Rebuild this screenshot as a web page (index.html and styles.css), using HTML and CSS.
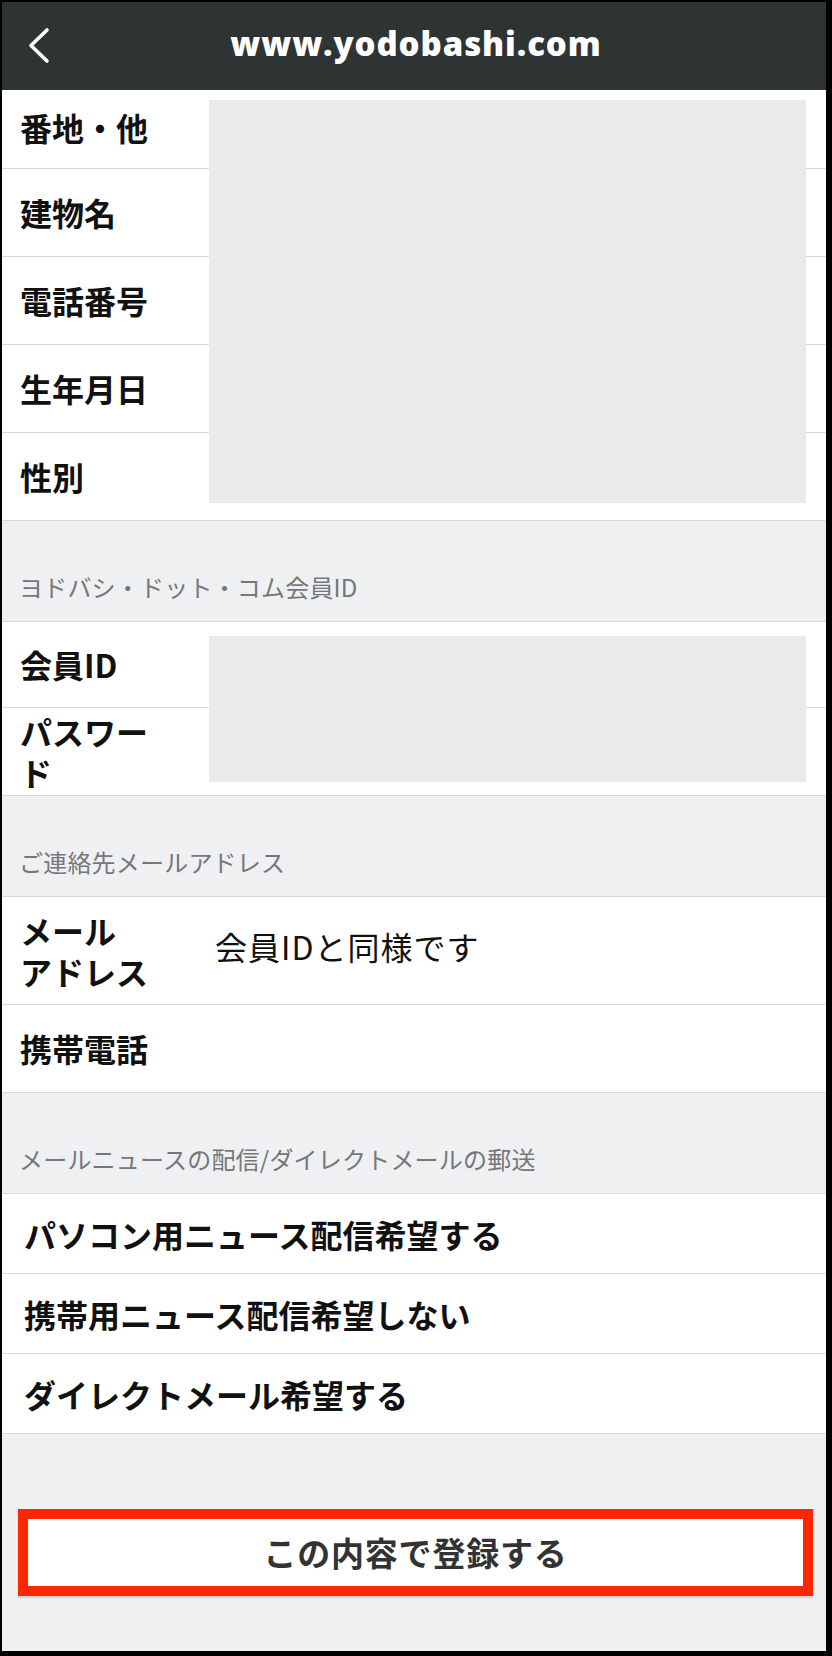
FILE: index.html
```html
<!DOCTYPE html>
<html lang="ja">
<head>
<meta charset="utf-8">
<title>www.yodobashi.com</title>
<link rel="stylesheet" href="styles.css">
</head>
<body>
<div class="frame">
  <header class="topbar">
    <div class="topbar-left">
      <svg class="back" width="24" height="40" viewBox="0 0 24 40" aria-hidden="true">
        <polyline points="19,3 3,18.5 19,34" fill="none" stroke="#fff" stroke-width="3.6" stroke-linecap="round" stroke-linejoin="round"/>
      </svg>
    </div>
    <div class="topbar-title">www.yodobashi.com</div>
    <div class="topbar-right"></div>
  </header>

  <div class="list list-first">
    <div class="row row-cut"><div class="label">番地・他</div></div>
    <div class="row"><div class="label">建物名</div></div>
    <div class="row"><div class="label">電話番号</div></div>
    <div class="row"><div class="label">生年月日</div></div>
    <div class="row"><div class="label">性別</div></div>
    <div class="mask mask-a"></div>
  </div>

  <div class="section-title">ヨドバシ・ドット・コム会員ID</div>

  <div class="list list-id">
    <div class="row row-short"><div class="label">会員ID</div></div>
    <div class="row"><div class="label">パスワード</div></div>
    <div class="mask mask-b"></div>
  </div>

  <div class="section-title">ご連絡先メールアドレス</div>

  <div class="list">
    <div class="row row-tall"><div class="label label-keep">メール&#8203;アドレス</div><div class="value">会員IDと同様です</div></div>
    <div class="row"><div class="label">携帯電話</div></div>
  </div>

  <div class="section-title">メールニュースの配信/ダイレクトメールの郵送</div>

  <div class="list">
    <div class="option">パソコン用ニュース配信希望する</div>
    <div class="option">携帯用ニュース配信希望しない</div>
    <div class="option">ダイレクトメール希望する</div>
  </div>

  <div class="footer">
    <button class="submit" type="button">この内容で登録する</button>
  </div>
</div>
</body>
</html>
```

FILE: styles.css
```css
* { box-sizing: border-box; }

html, body {
  margin: 0;
  padding: 0;
  background: #000;
}

body {
  font-family: "Noto Sans CJK JP", "Noto Sans", sans-serif;
  color: #111;
}

.frame {
  width: 832px;
  height: 1656px;
  border-style: solid;
  border-color: #000;
  border-width: 2px 6px 5px 2px;
  background: #eff0f2;
  display: flex;
  flex-direction: column;
  overflow: hidden;
}

.topbar {
  height: 88px;
  flex: 0 0 88px;
  background: #2e3334;
  display: grid;
  grid-template-columns: 1fr auto 1fr;
  align-items: center;
}

.topbar-left {
  padding-left: 26px;
  display: flex;
  align-items: center;
}

.back { display: block; margin-top: 1px; }

.topbar-title {
  color: #fff;
  font-family: "Open Sans", "Liberation Sans", sans-serif;
  font-weight: 800;
  font-size: 33px;
  letter-spacing: 0.9px;
  line-height: 40px;
  padding-left: 4px;
  padding-bottom: 4px;
}

.list {
  position: relative;
  background: #fff;
}

.row {
  height: 88px;
  border-bottom: 1px solid #d8d9db;
  display: flex;
  align-items: center;
  padding-left: 18px;
}

.row-cut { height: 79px; padding-bottom: 3px; }
.row-short { height: 86px; }
.row-tall { height: 108px; }

.label {
  flex: 0 0 140px;
  width: 140px;
  margin-right: 55px;
  font-weight: 700;
  font-size: 32px;
  line-height: 41px;
  color: #111;
}

.label-keep { word-break: keep-all; }

.value {
  font-size: 32px;
  font-weight: 400;
  color: #111;
  line-height: 41px;
  letter-spacing: 1px;
  margin-bottom: 8px;
}

.mask {
  position: absolute;
  left: 207px;
  width: 597px;
  background: #e9eaec;
}

.mask-a { top: 10px; height: 403px; }
.mask-b { top: 14px; height: 146px; }

.section-title {
  height: 101px;
  flex: 0 0 101px;
  border-bottom: 1px solid #d8d9db;
  padding: 50px 0 0 17px;
  font-size: 24px;
  line-height: 32px;
  color: #74777b;
  font-weight: 400;
  letter-spacing: 0.2px;
}

.option {
  height: 80px;
  border-bottom: 1px solid #d8d9db;
  display: flex;
  align-items: center;
  padding-left: 22px;
  font-size: 32px;
  font-weight: 700;
  color: #111;
}

.footer {
  flex: 1 1 auto;
  padding: 75px 13px 0 16px;
}

.submit {
  display: block;
  width: 100%;
  height: 87px;
  margin: 0;
  padding: 0 0 2px;
  background: #fff;
  border: 10px solid #ff2700;
  box-shadow: 0 2px 1px rgba(0, 0, 0, 0.12);
  font-family: "Noto Sans CJK JP", "Noto Sans", sans-serif;
  font-size: 33px;
  font-weight: 700;
  letter-spacing: 0.8px;
  color: #333;
  cursor: pointer;
}
```
